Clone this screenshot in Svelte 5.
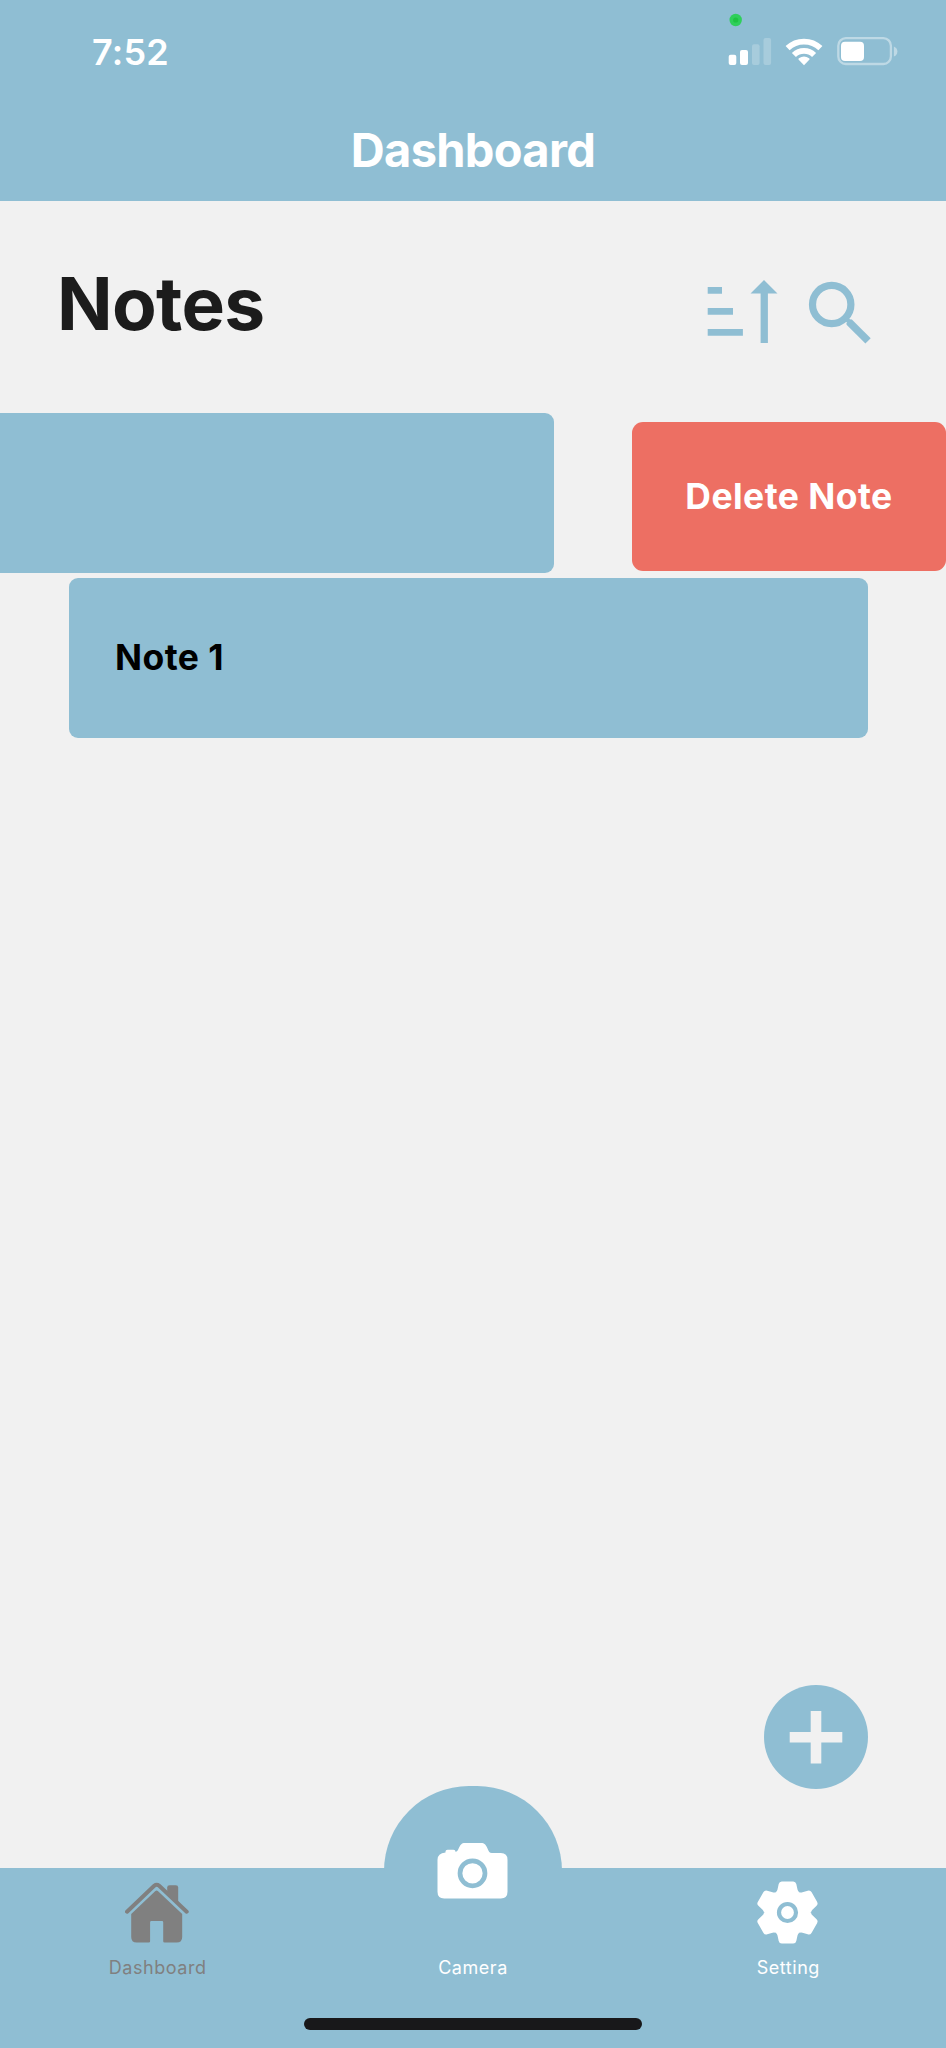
<script>
  const note = 'Note 1';
  const teeth = [0, 60, 120, 180, 240, 300];
</script>

<div class="screen">
  <header>
    <div class="status">
      <span class="time">7:52</span>
      <svg width="180" height="80" viewBox="720 0 180 80" aria-hidden="true">
        <circle cx="735.7" cy="20" r="6.2" fill="#2fcf5b" />
        <circle cx="735.7" cy="20" r="2.6" fill="#1fc343" />
        <g fill="#fff">
          <rect x="728.7" y="54.7" width="7.6" height="10.3" rx="2" />
          <rect x="740" y="50" width="8" height="15" rx="2" />
          <rect x="752" y="44.3" width="7.6" height="20.7" rx="2" opacity=".22" />
          <rect x="763.5" y="38" width="7.6" height="27" rx="2" opacity=".22" />
          <path d="M804 65.200l-5.300-5.400q-.8-.9.2-1.600 5.100-3.200 10.200 0 1 .7.200 1.600z" />
        </g>
        <g fill="none" stroke="#fff" stroke-width="5.8">
          <path d="M787.600 48.200a23.500 23.500 0 0 1 32.800 0" />
          <path d="M793.900 55a14.500 14.500 0 0 1 20.200 0" />
        </g>
        <rect x="838.3" y="38.2" width="52.6" height="25.8" rx="7.5" fill="none" stroke="#fff" stroke-opacity=".42" stroke-width="2.3" />
        <rect x="841" y="41.7" width="23" height="19.3" rx="4" fill="#fff" />
        <path d="M893.900 46.500q3.500 1.500 3.500 5t-3.500 5z" fill="#fff" opacity=".42" />
      </svg>
    </div>
    <h1>Dashboard</h1>
  </header>

  <main>
    <div class="heading">
      <h2>Notes</h2>
      <div class="tools">
        <svg width="72" height="66" viewBox="0 0 72 66" fill="#8fbed3" aria-hidden="true">
          <path d="M1.700 9h14.300v6.700H1.700zM1.700 30H27v6.700H1.700zM1.700 51h35.200v6.800H1.700zM54.600 65V15.500H44.500L58 2l13.500 13.500H61.900V65z" />
        </svg>
        <svg width="66" height="66" viewBox="0 0 66 66" aria-hidden="true">
          <circle cx="25.700" cy="26.500" r="19.200" fill="none" stroke="#8fbed3" stroke-width="7.200" />
          <path d="M39.500 40l5 5" stroke="#8fbed3" stroke-width="4.500" />
          <path fill="#8fbed3" d="M40.800 44.800l3-3q1.200-1 2.300 0L64.700 60.200 59.400 65.400 40.800 47q-1-1.100 0-2.200z" />
        </svg>
      </div>
    </div>

    <div class="swiped">
      <div class="card moved"></div>
      <button class="delete">Delete Note</button>
    </div>
    <div class="card"><span>{note}</span></div>

    <button class="add" aria-label="Add note">
      <svg width="104" height="104" viewBox="0 0 104 104"><path d="M52 26v52.500M25.700 52.200h52.600" stroke="#f1f1f1" stroke-width="10.600" /></svg>
    </button>
  </main>

  <nav>
    <div class="tab active">
      <svg width="66" height="64" viewBox="1.500 0 66 64" fill="#808080" aria-hidden="true">
        <path d="M43.700 6.500q0-2.300 2.300-2.300h6.300q2.400 0 2.400 2.400v14.400L43.700 10.800z" />
        <path d="M3.500 30.700L30.700 4.800q2.500-2 5 0L63.200 30.700" fill="none" stroke="#808080" stroke-width="4" stroke-linecap="round" />
        <path d="M31.600 10.200q1.500-1.200 3 0L58.700 33v23q0 5.500-5.500 5.500H41q-1.300 0-1.300-1.300V41.200q0-1.200-1.200-1.200h-10.700q-1.200 0-1.200 1.200v19q0 1.300-1.300 1.300H13.200q-5.500 0-5.500-5.500V33z" />
      </svg>
      <span>Dashboard</span>
    </div>
    <div class="tab camera">
      <div class="hump"></div>
      <svg width="72" height="58" viewBox="0.500 0 72 58" aria-hidden="true">
        <path fill="#fff" d="M9 10.500V9.500q0-1.800 2-1.800h6q2 0 2 2c1.500.1 2-.9 2.800-2.400C23.800 2.800 25 1 28.500 1h16c3.500 0 4.700 1.500 6.500 5.400 1.300 3 2 4.600 4.300 4.600h9q6.700 0 6.700 6.700v32.100q0 6.700-6.700 6.700H7.700Q1 56.500 1 49.800V17.700Q1 11.300 9 10.500z" />
        <circle cx="36" cy="31.300" r="12.500" fill="none" stroke="#8fbed3" stroke-width="4.700" />
      </svg>
      <span>Camera</span>
    </div>
    <div class="tab">
      <svg width="66" height="64" viewBox="-32.500 -31.500 66 64" fill="#fff" aria-hidden="true">
        <circle r="22.500" />
        {#each teeth as angle}
          <path transform="rotate({angle})" d="M0 0L-11.750-20.350Q-10.300-21.500-10-23L-8.800-28.500Q-8.200-31-5.700-31H5.700Q8.200-31 8.800-28.500L10-23Q10.300-21.500 11.750-20.350z" />
        {/each}
        <circle r="8.500" stroke="#8fbed3" stroke-width="4.200" />
      </svg>
      <span>Setting</span>
    </div>
    <div class="home-indicator"></div>
  </nav>
</div>

<style>
  :global(body) { margin: 0; }
  * { box-sizing: border-box; }
  .screen {
    display: flex;
    flex-direction: column;
    width: 946px;
    height: 2048px;
    overflow: hidden;
    background: #f1f1f1;
    font-family: Inter, 'Liberation Sans', sans-serif;
  }
  header { flex: none; height: 201px; background: #8fbed3; color: #fff; }
  .status { display: flex; justify-content: space-between; height: 100px; padding: 0 46px 0 92px; }
  .time { margin-top: 30px; font-size: 36px; font-weight: 600; line-height: 44px; letter-spacing: 0.200px; }
  h1 { margin: 20px 0 0; text-align: center; font-size: 47px; font-weight: 700; line-height: 60px; letter-spacing: -0.700px; }
  main { flex: none; height: 1667px; display: flex; flex-direction: column; }
  .heading { flex: none; display: flex; justify-content: space-between; height: 212px; padding: 58px 74px 0 57px; }
  h2 { margin: 0; font-size: 73px; font-weight: 700; line-height: 90px; letter-spacing: -0.650px; color: #1c1c1c; }
  .tools { display: flex; gap: 28px; padding-top: 19px; }
  .swiped { flex: none; display: flex; align-items: center; justify-content: space-between; height: 160px; margin-bottom: 4.500px; }
  .card {
    flex: none;
    display: flex;
    align-items: center;
    width: 799.500px;
    height: 160px;
    margin-left: 68.500px;
    padding: 0 0 1px 46.500px;
    border-radius: 9px;
    background: #8fbed3;
    color: #000;
    font-size: 35.500px;
    font-weight: 700;
    letter-spacing: 0.450px;
  }
  .card.moved { margin-left: -245.500px; }
  .delete {
    width: 314px;
    height: 149px;
    margin-top: 7px;
    padding: 0;
    border: 0;
    border-radius: 11px;
    background: #ed6f63;
    color: #fff;
    font: 700 35.500px Inter, sans-serif;
    letter-spacing: 0.450px;
  }
  .add {
    flex: none;
    width: 104px;
    height: 104px;
    margin: auto 78px 79px auto;
    padding: 0;
    border: 0;
    border-radius: 50%;
    background: #8fbed3;
  }
  .add svg, nav svg { display: block; }
  nav { position: relative; display: flex; height: 180px; background: #8fbed3; }
  .tab { flex: 1; position: relative; display: flex; flex-direction: column; align-items: center; padding-top: 13px; color: #fff; }
  .tab span { margin-top: 11px; font-size: 18px; line-height: 24px; letter-spacing: 0.550px; }
  .tab.active { color: #808080; }
  .tab.camera { padding-top: 0; }
  .camera svg { position: relative; margin-top: -26px; margin-bottom: 56px; }
  .tab.camera span { position: relative; margin-top: 0; }
  .hump { position: absolute; top: -82px; left: 50%; width: 178px; height: 90px; transform: translateX(-50%); border-radius: 85px 85px 0 0; background: #8fbed3; }
  .home-indicator { position: absolute; left: 304px; bottom: 18px; width: 338px; height: 12px; border-radius: 6px; background: #18181a; }
</style>
